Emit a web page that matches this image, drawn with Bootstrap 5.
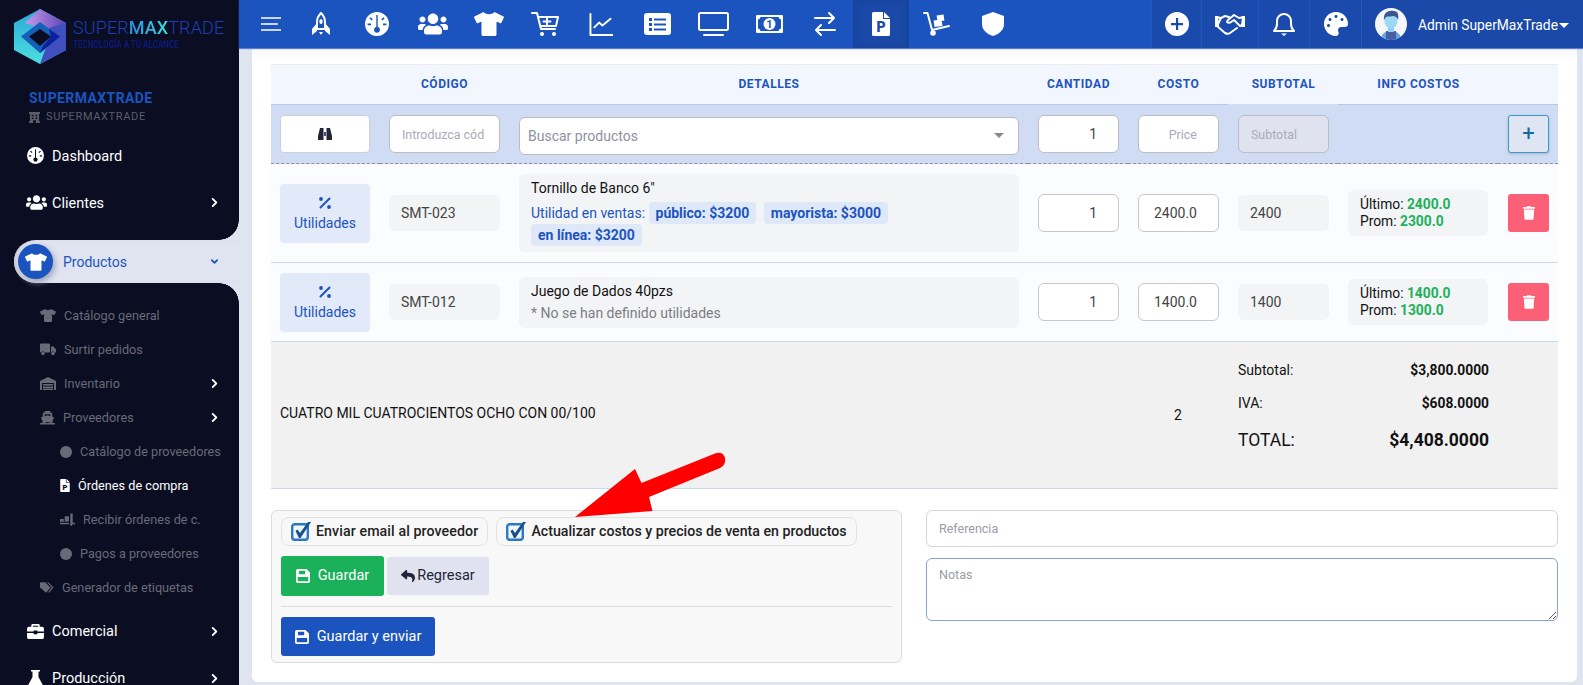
<!DOCTYPE html>
<html lang="es"><head><meta charset="utf-8"><title>Órdenes de compra</title>
<link rel="stylesheet" href="https://cdn.jsdelivr.net/npm/bootstrap@5.3.0/dist/css/bootstrap.min.css">
<style>
:root{--navy:#0b0e22;--lav:#e0e3f0;--blue:#1c54bf;--cut:#1c54bf;}
html,body{height:685px;overflow:hidden;}
body{font-family:Roboto,"Liberation Sans",sans-serif;font-size:14px;background:var(--lav);color:#222;position:relative;}
.ic{fill:currentColor;display:block;flex:none;}
.st{fill:none;stroke:currentColor;stroke-width:2;stroke-linecap:round;stroke-linejoin:round;}
.app{height:685px;}
.side{width:239px;flex:none;background:var(--navy);color:#fff;height:685px;overflow:hidden;}
.side>*{flex-shrink:0;}
.logo-zone{height:80px;padding:8px 0 0 13px;gap:6px;}
.logo-zone>svg{flex:none;}
.logo-word{font-size:18px;font-weight:300;letter-spacing:.1px;line-height:1;color:#1c3fb5;margin-top:11px;white-space:nowrap;}
.logo-word b{font-weight:500;background:linear-gradient(90deg,#2a8fe0,#35e0e0);-webkit-background-clip:text;background-clip:text;color:transparent;}
.logo-tag{font-size:8px;line-height:12px;font-weight:700;color:#0c1a7a;margin-top:2px;white-space:nowrap;transform:scaleY(1.35);transform-origin:left center;}
.brand-a{font-size:14px;font-weight:700;color:var(--blue);letter-spacing:.4px;margin:10px 0 0 29px;line-height:16px;}
.brand-b{font-size:11px;color:#5b5c68;letter-spacing:.65px;margin:4px 0 0 29px;line-height:14px;gap:6px;}
.mi{height:47px;padding:0 20px 0 27px;gap:8px;color:#fff;font-size:14.5px;position:relative;}
.mi .lbl{flex:1;white-space:nowrap;}
.mi-top .lbl{padding-top:2px;}
.chev{width:9px;height:9px;}
.first-mi{margin-top:8px;}
.mi-users{padding-left:26px;gap:5px;}
.mi-active-wrap{height:43px;margin:14px 0 15px 14px;background:var(--lav);border-radius:22px 0 0 22px;color:var(--blue);position:relative;padding-right:20px;gap:10px;box-shadow:inset 3px 0 3px -1px #c6c8cf;}
.mi-active-wrap .flex-fill{padding-top:2px;}
.mi-active-wrap::before,.mi-active-wrap::after{content:"";position:absolute;right:0;width:20px;height:20px;}
.mi-active-wrap::before{top:-20px;background:radial-gradient(circle at 0 0,var(--navy) 19.5px,var(--lav) 20px);}
.mi-active-wrap::after{bottom:-20px;background:radial-gradient(circle at 0 100%,var(--navy) 19.5px,var(--lav) 20px);}
.bubble{width:35px;height:35px;border-radius:50%;background:var(--blue);color:#fff;margin-left:4px;box-shadow:2px 3px 6px #9aa0b5;}
.sub{height:34px;padding:1px 20px 0 40px;color:#696a77;font-size:12.7px;gap:8px;white-space:nowrap;}
.sub .lbl{flex:1;}
.sub2{padding-left:60px;}
.sub-on{color:#fff;--cut:var(--navy);}
.dot{width:12px;height:12px;border-radius:50%;background:#696a77;flex:none;}
.main{flex:1;min-width:0;}
.topbar{height:48px;background:var(--blue);color:#fff;box-shadow:0 1px 1px #5d7fc8;position:relative;z-index:2;}
.tb{width:56px;height:48px;}
.tb-menu{width:44px;margin-left:10px;}
.tb-on{background:#1a49a8;box-shadow:inset 0 0 8px #174194;--cut:#1a49a8;}
.tb-r{height:48px;background:#1a4aab;border-left:1px solid #2058bd;--cut:#1a4aab;}
.tb-user{width:222px;background:#1a49a9;border-left:1px solid #2058bd;padding-left:13px;gap:11px;font-size:13.8px;white-space:nowrap;}
.tb-user span:first-of-type{padding-top:3px;}
.caret-d{width:0;height:0;border-left:5px solid transparent;border-right:5px solid transparent;border-top:5px solid #fff;margin-left:-10px;margin-top:2px;}
.ink-cut{fill:var(--cut);font-family:Roboto,sans-serif;}
.sheet{margin:0 6px 0 13px;height:634px;background:linear-gradient(#f8f8f8,#fff 14px);padding:16px 19px 0;border-radius:0 0 6px 6px;}
.grid-t{table-layout:fixed;width:1287px;margin:0;border-collapse:collapse;--bs-table-bg:transparent;}
.grid-t th,.grid-t td{padding:0 9px 0 10px;vertical-align:middle;border:0;}
.grid-t tr>:first-child{padding-left:9px;}
.grid-t tr>:nth-child(2){padding-left:9px;}
.rh th{height:40px;background:#f2f6fe;color:var(--blue);font-size:12px;font-weight:700;letter-spacing:.55px;text-align:center;border-top:1px solid #ececec;border-bottom:1px solid #b6c9ea;line-height:1;padding-bottom:2px!important;}
.rh th.soft{border-bottom-color:#d3dff3;}
.ra td{height:59px;background:#d0dcf3;border-bottom:1px dashed #8a93a5;}
.rp td{background:#fbfcff;border-bottom:1px solid #c9d9f2;}
.r1 td{height:99px;}.r2 td{height:79px;}
.rs td{height:147px;background:#f1f1f1;border-bottom:1px solid #c9d9f2;font-size:14px;color:#111;}
.rs .pack{padding-bottom:16px;}
.fld{height:38px;border:1px solid #b9bdc6;border-radius:6px;background:#fff;font-size:12.4px;padding:0 12px;box-shadow:none;color:#444;}
.fld::placeholder{color:#a9acb8;opacity:1;}
.fld:disabled{background:#e0e3ef;}
.fld.num{text-align:right;padding-right:21px;font-size:14px;}
.fld.num::placeholder{font-size:12.5px;}
.fld-soft{border-color:#c8c8c8;}
.binoc{height:38px;width:90px;background:#fff;border:1px solid #c9cfdc;border-radius:4px;color:#23243a;padding:0;}
.fake-sel{height:38px;border:1px solid #b9bdc6;border-radius:6px;background:#fff;color:#8f919c;padding:0 8px;font-size:14px;margin-top:3px;}
.fake-sel span:first-child{padding-top:1px;}
.sel-caret{border-left:5px solid transparent;border-right:5px solid transparent;border-top:5px solid #8a8a8a;margin-right:6px;}
.plus-b{width:41px;height:38px;background:#dfe5f2;border:1px solid #3a9ac8;border-radius:3px;color:#0e6b9b;font-size:22px;line-height:1;padding:0;box-shadow:0 1px 3px #a8b4cc;}
.util{width:90px;height:59px;background:#e2e9f8;color:var(--blue);border:0;border-radius:4px;font-size:14px;padding:3px 0 0;line-height:20px;}
.grey-box{background:#f3f4f6;border-radius:6px;}
.code-b{height:36px;padding:0 12px;color:#444;font-size:14px;}
.det{padding:3px 12px;line-height:22px;color:#111;font-size:14px;}
.det-1{height:78px;}.det-2{height:51px;}
.det-line{margin-top:3px;}
.det-u{color:var(--blue);}
.chip{display:inline-block;background:#dfe8f8;color:var(--blue);font-weight:700;font-size:14px;padding:0 7px;border-radius:4px;height:22px;margin:0 2px 0 0;}
.chip+.chip{margin-left:2px;}
.muted-t{color:#7b7d85;}
.info{padding:6px 12px;line-height:17px;height:46px;width:140px;white-space:nowrap;font-size:13.8px;color:#111;}
.gr{color:#1db15c;font-weight:700;}
.del{width:41px;height:38px;background:#fc6076;border:0;border-radius:3px;color:#fff;padding:0;}
.sum-l{height:33px;}
.sum-l b{font-size:13.8px;}
.sum-t{font-size:17.5px;height:40px;}
.foot{margin-top:21px;gap:24px;}
.panel{width:631px;height:153px;background:#f8f8f8;border:1px solid #dcdcdc;border-radius:6px;padding:6px 9px 0;}
.chk{height:29px;border:1px solid #e2e2e2;border-radius:8px;padding:0 9px;gap:4px;font-size:14.2px;font-weight:500;color:#222;white-space:nowrap;}
.chk-first{letter-spacing:.1px;}
.acts{margin-top:10px;gap:3px;}
.btn-g{background:#1bb15a;color:#fff;height:40px;width:103px;border:0;border-radius:3px;gap:8px;font-size:14.5px;padding:0;}
.btn-r{background:#e0e3ef;color:#23243a;height:38px;width:102px;border:0;border-radius:3px;gap:2px;font-size:14.5px;padding:0;}
.btn-b{background:var(--blue);color:#fff;height:39px;width:154px;border:0;border-radius:3px;gap:8px;font-size:14.5px;padding:0;}
.div-h{height:1px;background:#dcdcdc;margin:10px 0;}
.ref{height:37px;border:1px solid #d3d5dc;border-radius:6px;font-size:12.5px;padding:0 12px;box-shadow:none;}
.nts{height:63px;border:1px solid #86a4db;border-radius:6px;font-size:12.5px;padding:7px 12px;margin-top:11px;box-shadow:none;}
.ref::placeholder,.nts::placeholder{color:#9a9ca6;opacity:1;}
.annot{position:absolute;left:0;top:0;width:1583px;height:685px;pointer-events:none;z-index:5;}
</style></head>
<body>
<svg width="0" height="0" class="position-absolute">
<symbol id="shirt" viewBox="0 0 640 512"><path d="M631.2 96.5L436.5 0C416.4 27.8 371.9 47.2 320 47.2S223.6 27.8 203.5 0L8.8 96.5c-7.9 4-11.1 13.6-7.2 21.5l57.2 114.5c4 7.9 13.6 11.1 21.5 7.2l56.6-27.7c10.6-5.2 23 2.5 23 14.4V480c0 17.7 14.3 32 32 32h256c17.7 0 32-14.3 32-32V226.3c0-11.8 12.4-19.6 23-14.4l56.6 27.7c7.9 4 17.5.8 21.5-7.2L638.3 118c4-7.9.8-17.6-7.1-21.5z"/></symbol>
<symbol id="users" viewBox="0 0 640 512"><path d="M96 224c35.3 0 64-28.7 64-64s-28.7-64-64-64-64 28.7-64 64 28.7 64 64 64zm448 0c35.3 0 64-28.7 64-64s-28.7-64-64-64-64 28.7-64 64 28.7 64 64 64zm32 32h-64c-17.6 0-33.5 7.1-45.1 18.6 40.3 22.1 68.9 62 75.1 109.4h66c17.7 0 32-14.3 32-32v-32c0-35.3-28.7-64-64-64zm-256 0c61.9 0 112-50.1 112-112S381.9 32 320 32 208 82.1 208 144s50.1 112 112 112zm76.8 32h-8.3c-20.8 10-43.9 16-68.5 16s-47.6-6-68.5-16h-8.3C179.6 288 128 339.6 128 403.2V432c0 26.5 21.5 48 48 48h288c26.5 0 48-21.5 48-48v-28.8c0-63.6-51.6-115.2-115.2-115.2zm-223.7-13.4C161.5 263.1 145.6 256 128 256H64c-35.3 0-64 28.7-64 64v32c0 17.7 14.3 32 32 32h65.9c6.3-47.4 34.9-87.3 75.2-109.4z"/></symbol>
<symbol id="trash" viewBox="0 0 448 512"><path d="M432 32H312l-9.4-18.7A24 24 0 0 0 281.1 0H166.8a23.72 23.72 0 0 0-21.4 13.3L136 32H16A16 16 0 0 0 0 48v32a16 16 0 0 0 16 16h416a16 16 0 0 0 16-16V48a16 16 0 0 0-16-16zM53.2 467a48 48 0 0 0 47.9 45h245.8a48 48 0 0 0 47.9-45L416 128H32z"/></symbol>
<symbol id="reply" viewBox="0 0 512 512"><path d="M8.309 189.836L184.313 37.851C199.719 24.546 224 35.347 224 56.015v80.053c160.629 1.839 288 34.032 288 186.258 0 61.441-39.581 122.309-83.333 154.132-13.653 9.931-33.111-2.533-28.077-18.631 45.344-145.012-21.507-183.51-176.59-185.742V360c0 20.7-24.3 31.453-39.687 18.164l-176.004-152c-11.071-9.562-11.086-26.753 0-36.328z"/></symbol>
<symbol id="palette" viewBox="0 0 512 512"><path d="M204.3 5C104.9 24.4 24.8 104.3 5.2 203.4c-37 187 131.7 326.4 258.8 306.7 41.2-6.4 61.4-54.6 42.5-91.7-23.1-45.4 9.9-98.4 60.9-98.4h79.7c35.8 0 64.8-29.6 64.9-65.3C511.5 97.1 368.1-26.9 204.3 5zM96 320c-17.7 0-32-14.3-32-32s14.3-32 32-32 32 14.3 32 32-14.3 32-32 32zm32-128c-17.7 0-32-14.3-32-32s14.3-32 32-32 32 14.3 32 32-14.3 32-32 32zm128-64c-17.7 0-32-14.3-32-32s14.3-32 32-32 32 14.3 32 32-14.3 32-32 32zm128 64c-17.7 0-32-14.3-32-32s14.3-32 32-32 32 14.3 32 32-14.3 32-32 32z"/></symbol>
<symbol id="tach" viewBox="0 0 24 24"><path fill-rule="evenodd" d="M12 0a12 12 0 1 0 0 24 12 12 0 0 0 0-24zM11.300 3h1.400v11.800a3 3 0 1 1-1.400 0zM5.600 5.200l2.200 2.200-1.200 1.200-2.200-2.200zM18.400 5.200l1.200 1.200-2.200 2.200-1.200-1.200zM2.600 11.500H6v1.800H2.600zM18 11.500h3.400v1.800H18z"/></symbol>
<symbol id="rocket" viewBox="0 0 18 24"><path class="st" stroke-width="1.6" d="M9 1C6 4 5 7 5 10v7h8v-7c0-3-1-6-4-9z"/><path d="M5 11 0 17v6l5-4zM13 11l5 6v6l-5-4zM7 20h4l-2 3z"/><ellipse cx="9" cy="9.5" rx="1.7" ry="2.6"/></symbol>
<symbol id="cart" viewBox="0 0 28 24"><path class="st" stroke-width="1.6" d="M1 1h5l4 16h14M7 5h20l-2 9H9.5"/><path class="st" stroke-width="2" d="M16 6v7M12.5 9.500h7"/><circle cx="11" cy="22" r="2"/><circle cx="23" cy="22" r="2"/></symbol>
<symbol id="chart" viewBox="0 0 24 24"><path class="st" stroke-width="1.5" d="M1 1v22h23"/><path class="st" stroke-width="2.2" d="M5 15l5-5 3.500 3L22 6"/></symbol>
<symbol id="list" viewBox="0 0 27 22"><path fill-rule="evenodd" d="M3 0h21a3 3 0 0 1 3 3v16a3 3 0 0 1-3 3H3a3 3 0 0 1-3-3V3a3 3 0 0 1 3-3zM5 5v3h3V5zM5 10v3h3v-3zM5 15v3h3v-3zM10 5.500v2h12v-2zM10 10.500v2h12v-2zM10 15.500v2h12v-2z"/></symbol>
<symbol id="desk" viewBox="0 0 31 24"><rect class="st" x="1" y="1" width="29" height="17" rx="1.5"/><path class="st" d="M6 23h19"/></symbol>
<symbol id="money" viewBox="0 0 27 18"><path fill-rule="evenodd" d="M1 0h25a1 1 0 0 1 1 1v16a1 1 0 0 1-1 1H1a1 1 0 0 1-1-1V1a1 1 0 0 1 1-1zM4.500 2A3 3 0 0 1 2 4.500v9A3 3 0 0 1 4.500 16h18a3 3 0 0 1 2.500-2.500v-9A3 3 0 0 1 22.500 2z"/><ellipse cx="13.500" cy="9" rx="6" ry="6"/></symbol>
<symbol id="swap" viewBox="0 0 22 24"><path class="st" stroke-width="1.7" d="M1 6h19M15 1l5 5-5 5M21 18H2M7 13l-5 5 5 5"/></symbol>
<symbol id="file" viewBox="0 0 18 24"><path d="M0 1.500A1.500 1.500 0 0 1 1.500 0H11v7h7v15.500a1.500 1.500 0 0 1-1.500 1.500h-15A1.500 1.500 0 0 1 0 22.500z"/><path d="M12 0l6 6h-6z"/></symbol>
<symbol id="dolly" viewBox="0 0 28 24"><path class="st" stroke-width="1.8" d="M1 1h3.500L9 18l17-4"/><circle cx="10" cy="21" r="2.800"/><rect x="11" y="8" width="8" height="6.500" transform="rotate(-8 15 11)"/><rect x="14" y="3" width="7" height="6" transform="rotate(-8 17 6)"/></symbol>
<symbol id="shield" viewBox="0 0 22 24"><path d="M11 0 22 4v8c0 6-5 10-11 12C5 22 0 18 0 12V4z"/></symbol>
<symbol id="pluscirc" viewBox="0 0 24 24"><path fill-rule="evenodd" d="M12 0a12 12 0 1 0 0 24 12 12 0 0 0 0-24zM11 6h2.200v5H18v2.200h-4.800V18H11v-4.800H6V11h5z"/></symbol>
<symbol id="hands" viewBox="0 0 30 22"><path class="st" stroke-width="2" d="M1 4l5 1 4-2 4 1M29 4l-5 1-5-3-6 5-1 2c1 1 3 1 4 0l3-2 6 6 3-2M6 5 2 13l8 7c2 1 4 1 5 0l7-5"/><path d="M0 3h3l1 11H0zM30 3h-3l-1 11h4z"/></symbol>
<symbol id="bell" viewBox="0 0 22 24"><path class="st" stroke-width="1.7" d="M1 19c2-2 3-4 3-7V9a7 7 0 0 1 14 0v3c0 3 1 5 3 7z"/><path d="M8 21.500h6l-3 2.500z"/></symbol>
<symbol id="chevr" viewBox="0 0 10 10"><path class="st" stroke-width="2.200" d="M3 1l4 4-4 4"/></symbol>
<symbol id="chevd" viewBox="0 0 10 10"><path class="st" stroke-width="1.6" d="M2 3.500l3 3 3-3"/></symbol>
<symbol id="bld" viewBox="0 0 12 12"><path fill-rule="evenodd" d="M0 0h12v2h-1v8h1v2H7.500V9h-3v3H0v-2h1V2H0zM3 3v1.500h2V3zM7 3v1.500h2V3zM3 6v1.500h2V6zM7 6v1.500h2V6z"/></symbol>
<symbol id="truck" viewBox="0 0 16 12"><path d="M0 1a1 1 0 0 1 1-1h8a1 1 0 0 1 1 1v8H5a2.500 2.500 0 0 0-4 0 1 1 0 0 1-1-1zM11 3h2.500L16 6v3h-1a2.500 2.500 0 0 0-4 0z"/><circle cx="3" cy="10" r="1.800"/><circle cx="13" cy="10" r="1.800"/></symbol>
<symbol id="ware" viewBox="0 0 16 13"><path fill-rule="evenodd" d="M0 4 8 0l8 4v9h-2V6H2v7H0zM3 7h10v1.500H3zM3 9.500h10V11H3zM3 11.500h10V13H3z"/></symbol>
<symbol id="ship" viewBox="0 0 16 15"><path d="M5 0h6v2h2v4l2 1-2 5H3L1 7l2-1V2h2zM5 3.500v2l3-1 3 1v-2zM0 13c2 0 2-1 4-1s2 1 4 1 2-1 4-1 2 1 4 1v1.500H0z"/></symbol>
<symbol id="dollybox" viewBox="0 0 16 13"><path d="M11 0h2.500v10H16v1.500h-5zM5 3h4.500v5.500H5zM0 6h4v3H0zM0 10h9.500v1.500H0z"/><circle cx="12" cy="12" r="1.200"/></symbol>
<symbol id="tags" viewBox="0 0 16 13"><path d="M0 1a1 1 0 0 1 1-1h5l6 6-5 6-7-6zM8 0h1.500l6 6-5 6-1-1 4-5z"/></symbol>
<symbol id="case" viewBox="0 0 18 16"><path fill-rule="evenodd" d="M6 0h6a1.500 1.500 0 0 1 1.500 1.500V3H16a2 2 0 0 1 2 2v3h-7V7H7v1H0V5a2 2 0 0 1 2-2h2.500V1.500A1.500 1.500 0 0 1 6 0zM6.200 1.800V3h5.600V1.800z"/><path d="M0 9.500h7V11h4V9.500h7V14a2 2 0 0 1-2 2H2a2 2 0 0 1-2-2z"/></symbol>
<symbol id="flask" viewBox="0 0 14 17"><path d="M2.500 0h9v1.500h-1.500V7l4 7.500A1.700 1.700 0 0 1 12.500 17h-11A1.700 1.700 0 0 1 0 14.500L4 7V1.500H2.500z"/></symbol>
<symbol id="saveo" viewBox="0 0 16 16"><path fill-rule="evenodd" d="M2 0h10l4 4v10a2 2 0 0 1-2 2H2a2 2 0 0 1-2-2V2a2 2 0 0 1 2-2zM3.500 2v4h7V2zM2 9v5h12V9z"/></symbol>
<symbol id="binoc" viewBox="0 0 14 12"><path d="M2 0h3.500v12H0V8zM8.500 0H12l2 8v4H8.500zM6.200 4h1.600v4H6.200z"/></symbol>
<symbol id="pct" viewBox="0 0 12 12"><path class="st" stroke-width="1.800" d="M10.500 1.500l-9 9"/><circle cx="2" cy="2" r="1.900"/><circle cx="10" cy="10" r="1.900"/></symbol>
<symbol id="chkb" viewBox="0 0 21 19"><rect x="1.200" y="2.200" width="15.600" height="15.600" rx="2.500" fill="#f2f6fb" stroke="#2a79c4" stroke-width="2.400"/><path d="M4.500 9l2-1.500L9 11l8-11h3L9.500 16h-1.500z" fill="#16508f"/></symbol>
</svg>

<div class="app d-flex">
<aside class="side d-flex flex-column">
  <div class="logo-zone d-flex">
    <svg width="54" height="57" viewBox="0 0 54 57"><defs><linearGradient id="lg1" x1="0" y1="0" x2="0" y2="1"><stop offset="0" stop-color="#2aa8d8"/><stop offset="1" stop-color="#4ce0e0"/></linearGradient><linearGradient id="lg2" x1="0" y1="0" x2="1" y2="0"><stop offset="0" stop-color="#c79ae8"/><stop offset="1" stop-color="#5b44b8"/></linearGradient></defs><polygon points="27,1 53,15 53,42 27,56 1,42 1,15" fill="url(#lg1)"/><polygon points="27,1 53,15 53,20 40,24 12,15" fill="url(#lg2)"/><polygon points="53,15 53,42 27,56 32,42 42,29 36,20" fill="#3f4fc0"/><polygon points="27,14 47,28.500 27,45 8,28.500" fill="#1560b8"/><polygon points="27,21 38,28.500 27,38 16,28.500" fill="#0b0e22"/><polygon points="36,21 47,28.500 27,45 30,38 38,28.500" fill="#0c1f9c"/></svg>
    <div><div class="logo-word">SUPER<b>MAX</b>TRADE</div><div class="logo-tag">TECNOLOGÍA A TU ALCANCE</div></div>
  </div>
  <div class="brand-a">SUPERMAXTRADE</div>
  <div class="brand-b d-flex align-items-center"><svg class="ic" width="11" height="11"><use href="#bld"/></svg>SUPERMAXTRADE</div>
  <div class="mi mi-top first-mi d-flex align-items-center"><svg class="ic" width="17" height="17"><use href="#tach"/></svg><span class="lbl">Dashboard</span></div>
  <div class="mi mi-top mi-users d-flex align-items-center"><svg class="ic" width="21" height="17"><use href="#users"/></svg><span class="lbl">Clientes</span><svg class="chev"><use href="#chevr"/></svg></div>
  <div class="mi-active-wrap d-flex align-items-center"><span class="bubble d-flex align-items-center justify-content-center"><svg class="ic" width="22" height="18"><use href="#shirt"/></svg></span><span class="flex-fill">Productos</span><svg class="chev"><use href="#chevd"/></svg></div>
  <div class="sub d-flex align-items-center"><svg class="ic" width="16" height="13"><use href="#shirt"/></svg><span class="lbl">Catálogo general</span></div>
  <div class="sub d-flex align-items-center"><svg class="ic" width="16" height="13"><use href="#truck"/></svg><span class="lbl">Surtir pedidos</span></div>
  <div class="sub d-flex align-items-center"><svg class="ic" width="16" height="13"><use href="#ware"/></svg><span class="lbl">Inventario</span><svg class="chev text-white"><use href="#chevr"/></svg></div>
  <div class="sub d-flex align-items-center"><svg class="ic" width="15" height="14"><use href="#ship"/></svg><span class="lbl">Proveedores</span><svg class="chev text-white"><use href="#chevr"/></svg></div>
  <div class="sub sub2 d-flex align-items-center"><span class="dot"></span><span class="lbl">Catálogo de proveedores</span></div>
  <div class="sub sub2 sub-on d-flex align-items-center"><svg class="ic" width="10" height="13" viewBox="0 0 18 24"><use href="#file" width="18" height="24"/><text class="ink-cut" x="9" y="20" text-anchor="middle" font-size="14" font-weight="900">P</text></svg><span class="lbl">Órdenes de compra</span></div>
  <div class="sub sub2 d-flex align-items-center"><svg class="ic" width="15" height="13"><use href="#dollybox"/></svg><span class="lbl">Recibir órdenes de c.</span></div>
  <div class="sub sub2 d-flex align-items-center"><span class="dot"></span><span class="lbl">Pagos a proveedores</span></div>
  <div class="sub d-flex align-items-center"><svg class="ic" width="14" height="12"><use href="#tags"/></svg><span class="lbl">Generador de etiquetas</span></div>
  <div class="mi d-flex align-items-center mt-1"><svg class="ic" width="17" height="15"><use href="#case"/></svg><span class="lbl">Comercial</span><svg class="chev"><use href="#chevr"/></svg></div>
  <div class="mi d-flex align-items-center"><svg class="ic" width="17" height="17"><use href="#flask"/></svg><span class="lbl">Producción</span><svg class="chev"><use href="#chevr"/></svg></div>
</aside>
<div class="main d-flex flex-column">
  <header class="topbar d-flex align-items-center">
    <div class="tb tb-menu d-flex align-items-center justify-content-center"><svg width="20" height="14" viewBox="0 0 20 14"><path d="M0 1h20M0 7h17M0 13h20" stroke="#fff" stroke-width="1.700"/></svg></div>
    <div class="tb d-flex align-items-center justify-content-center"><svg class="ic" width="18" height="24"><use href="#rocket"/></svg></div>
    <div class="tb d-flex align-items-center justify-content-center"><svg class="ic" width="24" height="24"><use href="#tach"/></svg></div>
    <div class="tb d-flex align-items-center justify-content-center"><svg class="ic" width="30" height="24"><use href="#users"/></svg></div>
    <div class="tb d-flex align-items-center justify-content-center"><svg class="ic" width="30" height="24"><use href="#shirt"/></svg></div>
    <div class="tb d-flex align-items-center justify-content-center"><svg class="ic" width="28" height="24"><use href="#cart"/></svg></div>
    <div class="tb d-flex align-items-center justify-content-center"><svg class="ic" width="24" height="23"><use href="#chart"/></svg></div>
    <div class="tb d-flex align-items-center justify-content-center"><svg class="ic" width="27" height="22"><use href="#list"/></svg></div>
    <div class="tb d-flex align-items-center justify-content-center"><svg class="ic" width="31" height="24"><use href="#desk"/></svg></div>
    <div class="tb d-flex align-items-center justify-content-center"><svg class="ic" width="27" height="18" viewBox="0 0 27 18"><use href="#money" width="27" height="18"/><text class="ink-cut" x="13.500" y="13" text-anchor="middle" font-size="11" font-weight="700">1</text></svg></div>
    <div class="tb d-flex align-items-center justify-content-center"><svg class="ic" width="22" height="24"><use href="#swap"/></svg></div>
    <div class="tb tb-on d-flex align-items-center justify-content-center"><svg class="ic" width="18" height="24" viewBox="0 0 18 24"><use href="#file" width="18" height="24"/><text class="ink-cut" x="9" y="20" text-anchor="middle" font-size="14" font-weight="900">P</text></svg></div>
    <div class="tb d-flex align-items-center justify-content-center"><svg class="ic" width="28" height="24"><use href="#dolly"/></svg></div>
    <div class="tb d-flex align-items-center justify-content-center"><svg class="ic" width="22" height="24"><use href="#shield"/></svg></div>
    <div class="tb-r ms-auto d-flex align-items-center justify-content-center" style="width:50px"><svg class="ic" width="24" height="24"><use href="#pluscirc"/></svg></div>
    <div class="tb-r d-flex align-items-center justify-content-center" style="width:57px"><svg class="ic" width="30" height="22"><use href="#hands"/></svg></div>
    <div class="tb-r d-flex align-items-center justify-content-center" style="width:51px"><svg class="ic" width="22" height="24"><use href="#bell"/></svg></div>
    <div class="tb-r d-flex align-items-center justify-content-center" style="width:52px"><svg class="ic" width="24" height="24"><use href="#palette"/></svg></div>
    <div class="tb-r tb-user d-flex align-items-center">
      <svg width="32" height="32" viewBox="0 0 32 32"><defs><clipPath id="av"><circle cx="16" cy="16" r="16"/></clipPath></defs><g clip-path="url(#av)"><rect width="32" height="32" fill="#f4f6fa"/><path d="M6 32c0-6 4-9 10-9s10 3 10 9z" fill="#5fa8d8"/><path d="M11 32v-9h10v9z" fill="#4a5fa5"/><rect x="13" y="17" width="6" height="7" fill="#8fd0ee"/><ellipse cx="16" cy="13" rx="6.500" ry="7.500" fill="#9ad8f5"/><path d="M9 12C8 5 13 2 19 3c4 0 5 4 4 9-1-3-3-4-5-4-3 1-6 0-7 1z" fill="#3e5590"/></g></svg>
      <span>Admin SuperMaxTrade</span><span class="caret-d"></span>
    </div>
  </header>
  <main class="sheet">
    <table class="table grid-t">
      <colgroup><col style="width:109px"><col style="width:129px"><col style="width:519px"><col style="width:100px"><col style="width:100px"><col style="width:110px"><col style="width:160px"><col style="width:60px"></colgroup>
      <thead><tr class="rh"><th></th><th>CÓDIGO</th><th>DETALLES</th><th>CANTIDAD</th><th>COSTO</th><th class="soft">SUBTOTAL</th><th>INFO COSTOS</th><th></th></tr></thead>
      <tbody>
      <tr class="ra">
        <td><button class="btn binoc d-flex align-items-center justify-content-center"><svg class="ic" width="14" height="12"><use href="#binoc"/></svg></button></td>
        <td><input class="form-control fld" placeholder="Introduzca cód"></td>
        <td><div class="fake-sel d-flex align-items-center justify-content-between"><span>Buscar productos</span><span class="sel-caret"></span></div></td>
        <td><input class="form-control fld num" value="1"></td>
        <td><input class="form-control fld num" placeholder="Price"></td>
        <td><input class="form-control fld" placeholder="Subtotal" disabled></td>
        <td></td>
        <td><button class="btn plus-b">+</button></td>
      </tr>
      <tr class="rp r1">
        <td><button class="btn util d-flex flex-column align-items-center justify-content-center"><svg class="ic mb-1" width="12" height="12"><use href="#pct"/></svg>Utilidades</button></td>
        <td><div class="grey-box code-b d-flex align-items-center">SMT-023</div></td>
        <td><div class="grey-box det det-1">Tornillo de Banco 6"<div class="det-line"><span class="det-u">Utilidad en ventas:</span> <span class="chip">público: $3200</span> <span class="chip">mayorista: $3000</span></div><span class="chip">en línea: $3200</span></div></td>
        <td><input class="form-control fld num fld-soft" value="1"></td>
        <td><input class="form-control fld num fld-soft" value="2400.0"></td>
        <td><div class="grey-box code-b d-flex align-items-center">2400</div></td>
        <td><div class="grey-box info">Último: <span class="gr">2400.0</span><br>Prom: <span class="gr">2300.0</span></div></td>
        <td><button class="btn del d-flex align-items-center justify-content-center"><svg class="ic" width="12" height="14"><use href="#trash"/></svg></button></td>
      </tr>
      <tr class="rp r2">
        <td><button class="btn util d-flex flex-column align-items-center justify-content-center"><svg class="ic mb-1" width="12" height="12"><use href="#pct"/></svg>Utilidades</button></td>
        <td><div class="grey-box code-b d-flex align-items-center">SMT-012</div></td>
        <td><div class="grey-box det det-2">Juego de Dados 40pzs<br><span class="muted-t">* No se han definido utilidades</span></div></td>
        <td><input class="form-control fld num fld-soft" value="1"></td>
        <td><input class="form-control fld num fld-soft" value="1400.0"></td>
        <td><div class="grey-box code-b d-flex align-items-center">1400</div></td>
        <td><div class="grey-box info">Último: <span class="gr">1400.0</span><br>Prom: <span class="gr">1300.0</span></div></td>
        <td><button class="btn del d-flex align-items-center justify-content-center"><svg class="ic" width="12" height="14"><use href="#trash"/></svg></button></td>
      </tr>
      <tr class="rs">
        <td colspan="4"><span class="d-block pb-1">CUATRO MIL CUATROCIENTOS OCHO CON 00/100</span></td>
        <td class="text-center">2</td>
        <td colspan="2"><div class="pack">
          <div class="sum-l d-flex justify-content-between align-items-center"><span>Subtotal:</span><b>$3,800.0000</b></div>
          <div class="sum-l d-flex justify-content-between align-items-center"><span>IVA:</span><b>$608.0000</b></div>
          <div class="sum-t d-flex justify-content-between align-items-center"><span>TOTAL:</span><b>$4,408.0000</b></div>
        </div></td>
        <td></td>
      </tr>
      </tbody>
    </table>
    <div class="foot d-flex">
      <div class="panel">
        <div class="d-flex gap-2">
          <label class="chk chk-first d-flex align-items-center"><svg width="21" height="19"><use href="#chkb"/></svg>Enviar email al proveedor</label>
          <label class="chk d-flex align-items-center"><svg width="21" height="19"><use href="#chkb"/></svg>Actualizar costos y precios de venta en productos</label>
        </div>
        <div class="acts d-flex align-items-center">
          <button class="btn btn-g d-flex align-items-center justify-content-center"><svg class="ic" width="14" height="14"><use href="#saveo"/></svg>Guardar</button>
          <button class="btn btn-r d-flex align-items-center justify-content-center"><svg class="ic" width="14" height="14"><use href="#reply"/></svg>Regresar</button>
        </div>
        <div class="div-h"></div>
        <button class="btn btn-b d-flex align-items-center justify-content-center"><svg class="ic" width="14" height="14"><use href="#saveo"/></svg>Guardar y enviar</button>
      </div>
      <div class="flex-fill">
        <input class="form-control ref" placeholder="Referencia">
        <textarea class="form-control nts" placeholder="Notas"></textarea>
      </div>
    </div>
  </main>
</div>
</div>
<svg class="annot" viewBox="0 0 1583 685"><path d="M575 517 635 469 641.500 483 715 453.500Q723 451 725 458 726 465 720 468L649 497 652.500 511z" fill="#fe0000"/></svg>
</body></html>
